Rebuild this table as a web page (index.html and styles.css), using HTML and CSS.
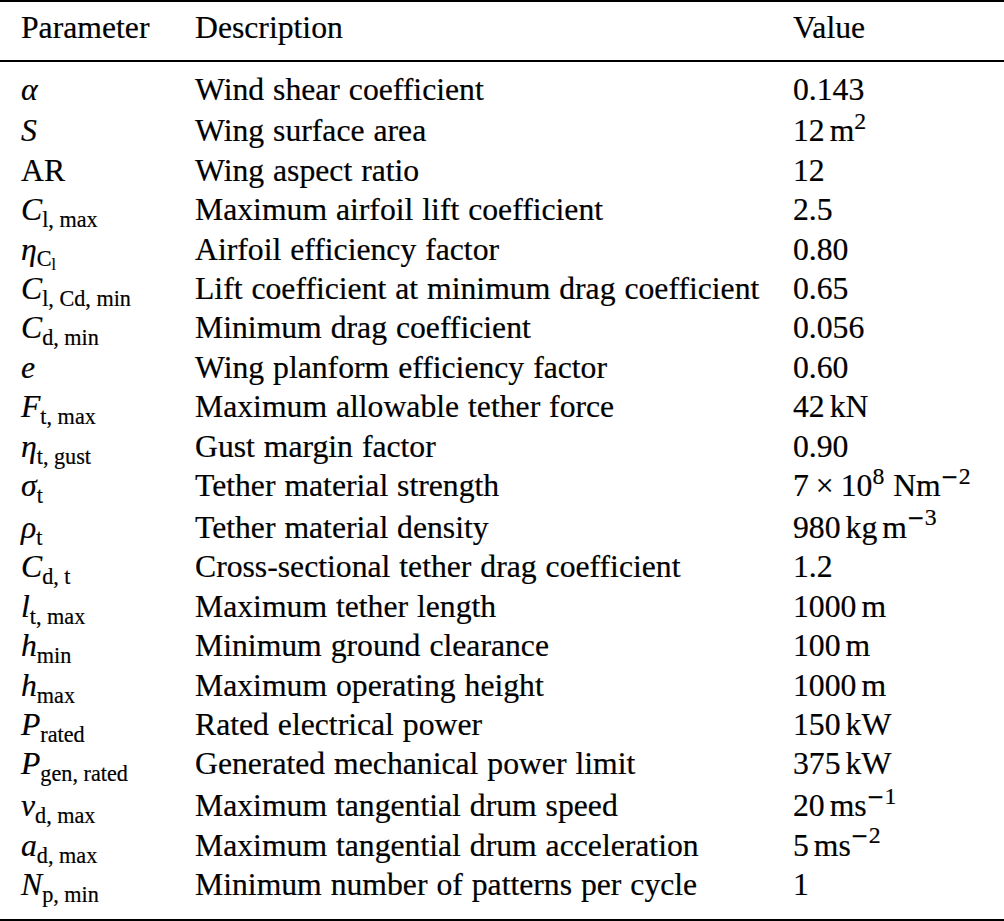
FILE: index.html
```html
<!DOCTYPE html>
<html lang="en">
<head>
<meta charset="utf-8">
<title>Parameters</title>
<link rel="stylesheet" href="styles.css">
</head>
<body>
<table class="params">
  <colgroup>
    <col class="c-param">
    <col class="c-desc">
    <col class="c-val">
  </colgroup>
  <thead>
    <tr><th>Parameter</th><th>Description</th><th>Value</th></tr>
  </thead>
  <tbody>
    <tr class="first"><td><i>α</i></td><td>Wind shear coefficient</td><td>0.143</td></tr>
    <tr class="tall"><td><i>S</i></td><td>Wing surface area</td><td>12<span class="ts"> </span>m<span class="sup">2</span></td></tr>
    <tr><td>AR</td><td>Wing aspect ratio</td><td>12</td></tr>
    <tr><td><i>C</i><span class="sub">l, max</span></td><td>Maximum airfoil lift coefficient</td><td>2.5</td></tr>
    <tr><td><i>η</i><span class="sub">C<span class="subsub">l</span></span></td><td>Airfoil efficiency factor</td><td>0.80</td></tr>
    <tr><td><i>C</i><span class="sub">l, Cd, min</span></td><td>Lift coefficient at minimum drag coefficient</td><td>0.65</td></tr>
    <tr><td><i>C</i><span class="sub">d, min</span></td><td>Minimum drag coefficient</td><td>0.056</td></tr>
    <tr><td><i>e</i></td><td>Wing planform efficiency factor</td><td>0.60</td></tr>
    <tr><td><i>F</i><span class="sub">t, max</span></td><td>Maximum allowable tether force</td><td>42<span class="ts"> </span>kN</td></tr>
    <tr><td><i>η</i><span class="sub">t, gust</span></td><td>Gust margin factor</td><td>0.90</td></tr>
    <tr><td><i>σ</i><span class="sub">t</span></td><td>Tether material strength</td><td>7<span class="times">×</span>10<span class="sup">8</span> Nm<span class="sup"><span class="minus">−</span>2</span></td></tr>
    <tr class="tall"><td><i>ρ</i><span class="sub">t</span></td><td>Tether material density</td><td>980<span class="ts"> </span>kg<span class="ts"> </span>m<span class="sup"><span class="minus">−</span>3</span></td></tr>
    <tr><td><i>C</i><span class="sub">d, t</span></td><td>Cross-sectional tether drag coefficient</td><td>1.2</td></tr>
    <tr><td><i>l</i><span class="sub">t, max</span></td><td>Maximum tether length</td><td>1000<span class="ts"> </span>m</td></tr>
    <tr><td><i>h</i><span class="sub">min</span></td><td>Minimum ground clearance</td><td>100<span class="ts"> </span>m</td></tr>
    <tr><td><i>h</i><span class="sub">max</span></td><td>Maximum operating height</td><td>1000<span class="ts"> </span>m</td></tr>
    <tr><td><i>P</i><span class="sub">rated</span></td><td>Rated electrical power</td><td>150<span class="ts"> </span>kW</td></tr>
    <tr><td><i>P</i><span class="sub">gen, rated</span></td><td>Generated mechanical power limit</td><td>375<span class="ts"> </span>kW</td></tr>
    <tr class="tall"><td><i>v</i><span class="sub">d, max</span></td><td>Maximum tangential drum speed</td><td>20<span class="ts"> </span>ms<span class="sup"><span class="minus">−</span>1</span></td></tr>
    <tr><td><i>a</i><span class="sub">d, max</span></td><td>Maximum tangential drum acceleration</td><td>5<span class="ts"> </span>ms<span class="sup"><span class="minus">−</span>2</span></td></tr>
    <tr class="last"><td><i>N</i><span class="sub">p, min</span></td><td>Minimum number of patterns per cycle</td><td>1</td></tr>
  </tbody>
</table>
</body>
</html>
```

FILE: styles.css
```css
html, body {
  margin: 0;
  padding: 0;
  background: #ffffff;
}

body {
  color: #000000;
  font-family: "Liberation Serif", "Times New Roman", serif;
  font-size: 31.7px;
  word-spacing: 1px;
  -webkit-text-stroke: 0.2px #000;
}

.params {
  width: 1004px;
  table-layout: fixed;
  border-collapse: separate;
  border-spacing: 0;
}

.c-param { width: 195px; }
.c-desc { width: 598px; }
.c-val { width: 211px; }

.params th,
.params td {
  padding: 0;
  text-align: left;
  font-weight: normal;
  line-height: 39.4px;
  white-space: nowrap;
  vertical-align: baseline;
}

.params th:first-child,
.params td:first-child {
  padding-left: 21px;
}

.params th {
  border-top: 2px solid #000;
  border-bottom: 2px solid #000;
  padding-top: 6px;
  padding-bottom: 12.5px;
}

.params tr.first td {
  padding-top: 7.6px;
}

.params tr.tall td {
  padding-top: 2.5px;
}

.params tr.last td {
  padding-bottom: 14.2px;
  border-bottom: 2px solid #000;
}

.params i {
  font-style: italic;
}

.sub {
  font-size: 0.7em;
  word-spacing: 0;
  line-height: 0;
  vertical-align: -6.5px;
}

.subsub {
  font-size: 0.72em;
  line-height: 0;
  vertical-align: -3.5px;
}

.sup {
  font-size: 0.75em;
  line-height: 0;
  vertical-align: 12.5px;
}

.minus {
  font-family: "DejaVu Serif", "Liberation Serif", serif;
  font-size: 0.9em;
}

.times {
  margin: 0 7px;
}

.ts {
  display: inline-block;
  width: 5px;
}
```
